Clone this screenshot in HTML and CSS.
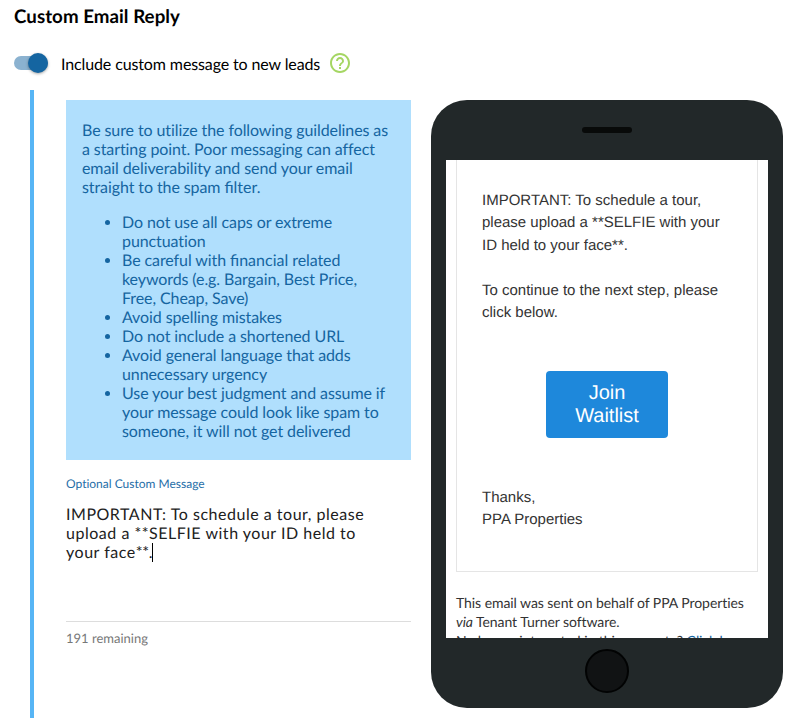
FILE: index.html
```html
<!DOCTYPE html>
<html lang="en">
<head>
<meta charset="utf-8">
<title>Custom Email Reply</title>
<link rel="stylesheet" href="styles.css">
</head>
<body>
<main class="page">
  <h1 class="title">Custom Email Reply</h1>
  <div class="toggle-row">
    <div class="switch" role="switch" aria-checked="true"><span class="thumb"></span></div>
    <span class="toggle-label">Include custom message to new leads</span>
    <svg class="help" viewBox="0 0 24 24"><path fill="#a5d663" d="M11 18h2v-2h-2v2zm1-16C6.48 2 2 6.48 2 12s4.480 10 10 10 10-4.480 10-10S17.520 2 12 2zm0 18c-4.410 0-8-3.590-8-8s3.590-8 8-8 8 3.590 8 8-3.590 8-8 8zm0-14c-2.210 0-4 1.790-4 4h2c0-1.100.9-2 2-2s2 .9 2 2c0 2-3 1.750-3 5h2c0-2.250 3-2.500 3-5 0-2.210-1.790-4-4-4z"/></svg>
  </div>
  <section class="content">
    <div class="editor">
      <div class="notice">
        <p>Be sure to utilize the following guildelines as<br>a starting point. Poor messaging can affect<br>email deliverability and send your email<br>straight to the spam <span class="lig">filter.</span></p>
        <ul>
          <li>Do not use all caps or extreme<br>punctuation</li>
          <li>Be careful with <span class="lig">financial</span> related<br>keywords (e.g. Bargain, Best Price,<br>Free, Cheap, Save)</li>
          <li>Avoid spelling mistakes</li>
          <li>Do not include a shortened URL</li>
          <li>Avoid general language that adds<br>unnecessary urgency</li>
          <li>Use your best judgment and assume if<br>your message could look like spam to<br>someone, it will not get delivered</li>
        </ul>
      </div>
      <div class="field-label">Optional Custom Message</div>
      <div class="field">IMPORTANT: To schedule a tour, please<br>upload a **SELFIE with your ID held to<br>your face<span class="stars">**.</span><span class="caret"></span></div>
      <div class="remaining">191 remaining</div>
    </div>
    <div class="phone">
      <div class="phone-top"><span class="speaker"></span></div>
      <div class="screen">
        <div class="card">
          <p>IMPORTANT: To schedule a tour,<br>please upload a **SELFIE with your<br>ID held to your face**.</p>
          <p>To continue to the next step, please<br>click below.</p>
          <a class="join">Join<br>Waitlist</a>
          <p>Thanks,<br>PPA Properties</p>
        </div>
        <div class="footer">This email was sent on behalf of PPA Properties<br><em>via</em> Tenant Turner software.<br>No longer interested in this property? <a class="link">Click here</a></div>
      </div>
      <div class="phone-bottom"><span class="home"></span></div>
    </div>
  </section>
</main>
</body>
</html>
```
FILE: styles.css
```css
* { box-sizing: border-box; }
body {
  margin: 0;
  background: #fff;
  color: #000;
  font: 16px/19px Lato, sans-serif;
  font-variant-ligatures: none;
  text-rendering: geometricPrecision;
  white-space: nowrap;
}
.lig { font-variant-ligatures: normal; letter-spacing: 0; }
.page { height: 721px; overflow: hidden; padding: 5px 14px 0; }
.title { margin: 0; font-size: 18.72px; line-height: 22px; font-weight: 700; letter-spacing: .05px; }
.toggle-row { display: flex; align-items: center; height: 24px; margin-top: 24px; }
.switch {
  display: flex;
  align-items: center;
  justify-content: flex-end;
  width: 34px;
  height: 14px;
  margin-right: 13px;
  border-radius: 7px;
  background: #8bb2d0;
}
.thumb {
  flex: none;
  width: 20px;
  height: 20px;
  border-radius: 50%;
  background: #1565a1;
  box-shadow: 0 1px 3px rgba(0, 0, 0, .35);
}
.toggle-label { width: 259px; padding-top: 2px; letter-spacing: -.12px; }
.help { width: 24px; height: 24px; margin-left: 8px; }
.content {
  display: flex;
  gap: 20px;
  height: 628px;
  margin: 15px 0 0 16px;
  padding: 10px 0 0 32px;
  border-left: 4px solid #57b5f5;
}
.editor { width: 345px; }
.notice {
  height: 360px;
  padding: 21px 16px;
  background: #b0dffd;
  color: #1565a1;
  letter-spacing: -.09px;
}
.notice p { margin: 0 0 16px; }
.notice ul { margin: 0; padding-left: 40px; }
.field-label { margin-top: 16px; font-size: 12px; line-height: 16px; color: #1f6ea8; }
.field {
  height: 117px;
  margin-top: 13px;
  border-bottom: 1px solid #ddd;
  color: #212121;
  letter-spacing: .52px;
}
.stars { letter-spacing: -.3px; }
.caret { display: inline-block; width: 1px; height: 19px; background: #000; vertical-align: -4px; }
.remaining { margin-top: 8px; font-size: 13px; line-height: 17px; color: #777; }
.phone {
  width: 352px;
  height: 608px;
  padding: 0 15px;
  border-radius: 36px;
  background: #222829;
}
.phone-top, .phone-bottom { display: flex; align-items: center; justify-content: center; height: 60px; }
.speaker { width: 50px; height: 6px; border-radius: 3px; background: #080a09; }
.phone-bottom { height: 66px; }
.home { width: 44px; height: 44px; border: 2px solid #020303; border-radius: 50%; background: #111314; }
.screen { height: 478px; padding: 0 10px; overflow: hidden; background: #fff; }
.card {
  height: 412px;
  padding: 30px 25px 0;
  border: 1px solid #e5e5e5;
  border-top: 0;
  color: #333;
  font: 15px/22.4px "Liberation Sans", sans-serif;
}
.card p { margin: 0 0 22.5px; }
.join {
  display: block;
  width: 122px;
  height: 67px;
  margin: 46.5px auto 48px;
  padding-top: 11px;
  border-radius: 4px;
  background: #1e88db;
  color: #fff;
  font-size: 20px;
  line-height: 23px;
  text-align: center;
}
.join + p { padding-top: 1px; }
.footer { margin-top: 21px; font-size: 14px; line-height: 19px; letter-spacing: -.065px; color: #333; }
.link { color: #1565a1; text-decoration: underline; }
```
